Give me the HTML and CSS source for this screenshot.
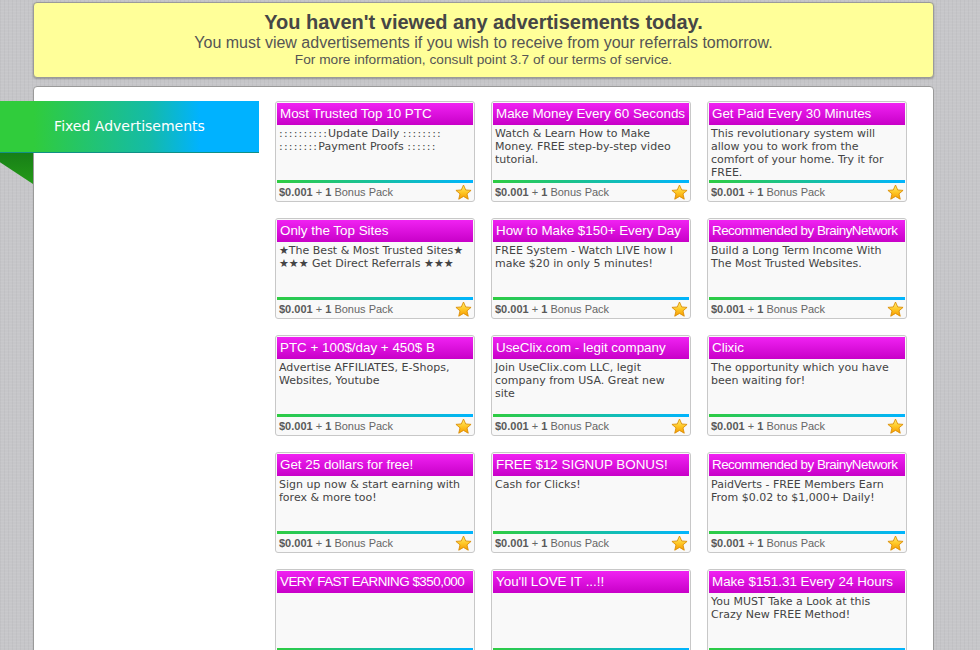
FILE: index.html
```html
<!DOCTYPE html>
<html lang="en">
<head>
  <meta charset="UTF-8">
  <title>View Advertisements</title>
  <link rel="stylesheet" href="styles.css">
</head>
<body>
  <div class="page">
    <div class="notice">
      <div class="notice-title">You haven't viewed any advertisements today.</div>
      <div class="notice-text">You must view advertisements if you wish to receive from your referrals tomorrow.</div>
      <div class="notice-small">For more information, consult point 3.7 of our terms of service.</div>
    </div>

    <div class="panel">
      <div class="sidebar">
        <div class="ribbon">Fixed Advertisements</div>
      </div>

      <div class="ads">
        <div class="ad">
          <div class="ad-title">Most Trusted Top 10 PTC</div>
          <div class="ad-body"><span class="dots">::::::::::</span>Update Daily <span class="dots">::::::::</span><br><span class="dots">::::::::</span>Payment Proofs <span class="dots">::::::</span></div>
          <div class="ad-foot"><span><b>$0.001</b> + <b>1</b> Bonus Pack</span><svg class="star" viewBox="0 0 20 20"><use href="#star"/></svg></div>
        </div>
        <div class="ad">
          <div class="ad-title">Make Money Every 60 Seconds</div>
          <div class="ad-body">Watch &amp; Learn How to Make Money. FREE step-by-step video tutorial.</div>
          <div class="ad-foot"><span><b>$0.001</b> + <b>1</b> Bonus Pack</span><svg class="star" viewBox="0 0 20 20"><use href="#star"/></svg></div>
        </div>
        <div class="ad">
          <div class="ad-title">Get Paid Every 30 Minutes</div>
          <div class="ad-body">This revolutionary system will allow you to work from the comfort of your home. Try it for FREE.</div>
          <div class="ad-foot"><span><b>$0.001</b> + <b>1</b> Bonus Pack</span><svg class="star" viewBox="0 0 20 20"><use href="#star"/></svg></div>
        </div>

        <div class="ad">
          <div class="ad-title">Only the Top Sites</div>
          <div class="ad-body">★The Best &amp; Most Trusted Sites★<br>★★★ Get Direct Referrals ★★★</div>
          <div class="ad-foot"><span><b>$0.001</b> + <b>1</b> Bonus Pack</span><svg class="star" viewBox="0 0 20 20"><use href="#star"/></svg></div>
        </div>
        <div class="ad">
          <div class="ad-title">How to Make $150+ Every Day</div>
          <div class="ad-body">FREE System - Watch LIVE how I make $20 in only 5 minutes!</div>
          <div class="ad-foot"><span><b>$0.001</b> + <b>1</b> Bonus Pack</span><svg class="star" viewBox="0 0 20 20"><use href="#star"/></svg></div>
        </div>
        <div class="ad">
          <div class="ad-title tight">Recommended by BrainyNetwork</div>
          <div class="ad-body">Build a Long Term Income With The Most Trusted Websites.</div>
          <div class="ad-foot"><span><b>$0.001</b> + <b>1</b> Bonus Pack</span><svg class="star" viewBox="0 0 20 20"><use href="#star"/></svg></div>
        </div>

        <div class="ad">
          <div class="ad-title">PTC + 100$/day + 450$ B</div>
          <div class="ad-body">Advertise AFFILIATES, E-Shops, Websites, Youtube</div>
          <div class="ad-foot"><span><b>$0.001</b> + <b>1</b> Bonus Pack</span><svg class="star" viewBox="0 0 20 20"><use href="#star"/></svg></div>
        </div>
        <div class="ad">
          <div class="ad-title">UseClix.com - legit company</div>
          <div class="ad-body">Join UseClix.com LLC, legit company from USA. Great new site</div>
          <div class="ad-foot"><span><b>$0.001</b> + <b>1</b> Bonus Pack</span><svg class="star" viewBox="0 0 20 20"><use href="#star"/></svg></div>
        </div>
        <div class="ad">
          <div class="ad-title">Clixic</div>
          <div class="ad-body">The opportunity which you have been waiting for!</div>
          <div class="ad-foot"><span><b>$0.001</b> + <b>1</b> Bonus Pack</span><svg class="star" viewBox="0 0 20 20"><use href="#star"/></svg></div>
        </div>

        <div class="ad">
          <div class="ad-title">Get 25 dollars for free!</div>
          <div class="ad-body">Sign up now &amp; start earning with forex &amp; more too!</div>
          <div class="ad-foot"><span><b>$0.001</b> + <b>1</b> Bonus Pack</span><svg class="star" viewBox="0 0 20 20"><use href="#star"/></svg></div>
        </div>
        <div class="ad">
          <div class="ad-title">FREE $12 SIGNUP BONUS!</div>
          <div class="ad-body">Cash for Clicks!</div>
          <div class="ad-foot"><span><b>$0.001</b> + <b>1</b> Bonus Pack</span><svg class="star" viewBox="0 0 20 20"><use href="#star"/></svg></div>
        </div>
        <div class="ad">
          <div class="ad-title tight">Recommended by BrainyNetwork</div>
          <div class="ad-body">PaidVerts - FREE Members Earn From $0.02 to $1,000+ Daily!</div>
          <div class="ad-foot"><span><b>$0.001</b> + <b>1</b> Bonus Pack</span><svg class="star" viewBox="0 0 20 20"><use href="#star"/></svg></div>
        </div>

        <div class="ad">
          <div class="ad-title tight">VERY FAST EARNING $350,000</div>
          <div class="ad-body"></div>
          <div class="ad-foot"><span><b>$0.001</b> + <b>1</b> Bonus Pack</span><svg class="star" viewBox="0 0 20 20"><use href="#star"/></svg></div>
        </div>
        <div class="ad">
          <div class="ad-title">You'll LOVE IT ...!!</div>
          <div class="ad-body"></div>
          <div class="ad-foot"><span><b>$0.001</b> + <b>1</b> Bonus Pack</span><svg class="star" viewBox="0 0 20 20"><use href="#star"/></svg></div>
        </div>
        <div class="ad">
          <div class="ad-title">Make $151.31 Every 24 Hours</div>
          <div class="ad-body">You MUST Take a Look at this Crazy New FREE Method!</div>
          <div class="ad-foot"><span><b>$0.001</b> + <b>1</b> Bonus Pack</span><svg class="star" viewBox="0 0 20 20"><use href="#star"/></svg></div>
        </div>
      </div>
    </div>
  </div>

  <!-- shared star symbol for the ad footers -->
  <svg width="0" height="0" class="defs">
    <defs>
      <linearGradient id="starfill" x1="0" y1="0" x2="0" y2="1">
        <stop offset="0" stop-color="#fff176"/>
        <stop offset="0.5" stop-color="#ffc928"/>
        <stop offset="1" stop-color="#f59a00"/>
      </linearGradient>
      <symbol id="star" viewBox="0 0 20 20">
        <path d="M10 1.2 L12.6 7 L18.9 7.5 L14.1 11.6 L15.6 17.9 L10 14.6 L4.4 17.9 L5.9 11.6 L1.1 7.5 L7.4 7 Z" fill="url(#starfill)" stroke="#d98a00" stroke-width="1" stroke-linejoin="round"/>
      </symbol>
    </defs>
  </svg>
</body>
</html>
```

FILE: styles.css
```css
body {
  margin: 0;
  overflow: hidden;
  background-color: #c6c6c9;
  background-image:
    repeating-linear-gradient(0deg, rgba(255,255,255,0.05) 0 1px, transparent 1px 3px),
    repeating-linear-gradient(90deg, rgba(0,0,0,0.03) 0 1px, transparent 1px 4px);
  font-family: "Liberation Sans", Arial, sans-serif;
}

.page {
  width: 901px;
  margin-left: 33px;
  padding-top: 2px;
}

/* yellow warning box */
.notice {
  box-sizing: border-box;
  height: 76px;
  background: #ffff99;
  border: 1px solid #9a9a9a;
  border-radius: 4px;
  box-shadow: 0 1px 2px rgba(0,0,0,0.25);
  text-align: center;
  padding: 7px 0 9px;
}

.notice-title {
  font-size: 20px;
  font-weight: bold;
  line-height: 24px;
  color: #464646;
}

.notice-text {
  font-size: 16px;
  line-height: 18px;
  color: #555;
}

.notice-small {
  font-size: 13.7px;
  line-height: 16px;
  color: #555;
}

/* white main panel */
.panel {
  margin-top: 8px;
  background: #fff;
  border: 1px solid #9a9a9a;
  border-radius: 4px;
  display: flex;
  gap: 16px;
  padding-top: 14px;
  min-height: 600px;
}

.sidebar {
  width: 225px;
  flex: none;
}

.ribbon {
  position: relative;
  margin-left: -34px;
  height: 51px;
  line-height: 51px;
  text-align: center;
  color: #fff;
  font-family: "DejaVu Sans", Verdana, sans-serif;
  font-size: 14px;
  background: linear-gradient(90deg, #30cc3c 0, #30cc3c 34px, #14bba8 150px, #00b2ff 200px, #00b2ff 100%);
  box-shadow: 0 1px 0 #108f86;
}

/* folded corner under the ribbon */
.ribbon::after {
  content: "";
  position: absolute;
  left: 0;
  top: 52px;
  width: 33px;
  height: 31px;
  background: linear-gradient(180deg, #177f17, #249a18);
  clip-path: polygon(0 0, 100% 0, 100% 100%, 0 30%);
}

.ads {
  display: grid;
  grid-template-columns: repeat(3, 200px);
  grid-auto-rows: 101px;
  column-gap: 16px;
  row-gap: 16px;
}

.ad {
  box-sizing: border-box;
  border: 1px solid #c8c8c8;
  border-radius: 3px;
  padding: 1px;
  background: #f9f9f9;
  display: flex;
  flex-direction: column;
}

.ad-title {
  height: 22px;
  line-height: 22px;
  padding: 0 3px;
  font-size: 13.4px;
  color: #fff;
  white-space: nowrap;
  overflow: hidden;
  background: linear-gradient(180deg, #f022f2, #c800c8);
}

/* long titles squeezed to fit the box */
.ad-title.tight {
  letter-spacing: -0.5px;
  padding-right: 0;
}

.ad-body {
  flex: 1;
  padding: 2px 2px 0;
  font-family: "DejaVu Sans", Verdana, sans-serif;
  font-size: 11px;
  line-height: 13px;
  color: #444;
  overflow: hidden;
  border-bottom: 3px solid transparent;
  border-image: linear-gradient(90deg, #2ecc40, #00b4ff) 1;
}

.ad-body .dots {
  letter-spacing: 1.2px;
}

.ad-foot {
  height: 17px;
  display: flex;
  align-items: center;
  justify-content: space-between;
  padding: 0 1px 0 2px;
  font-size: 11px;
  color: #666;
}

.ad-foot b {
  color: #5a5a5a;
}

.star {
  width: 17px;
  height: 17px;
  margin-top: 1px;
}

.defs {
  position: absolute;
}
```
